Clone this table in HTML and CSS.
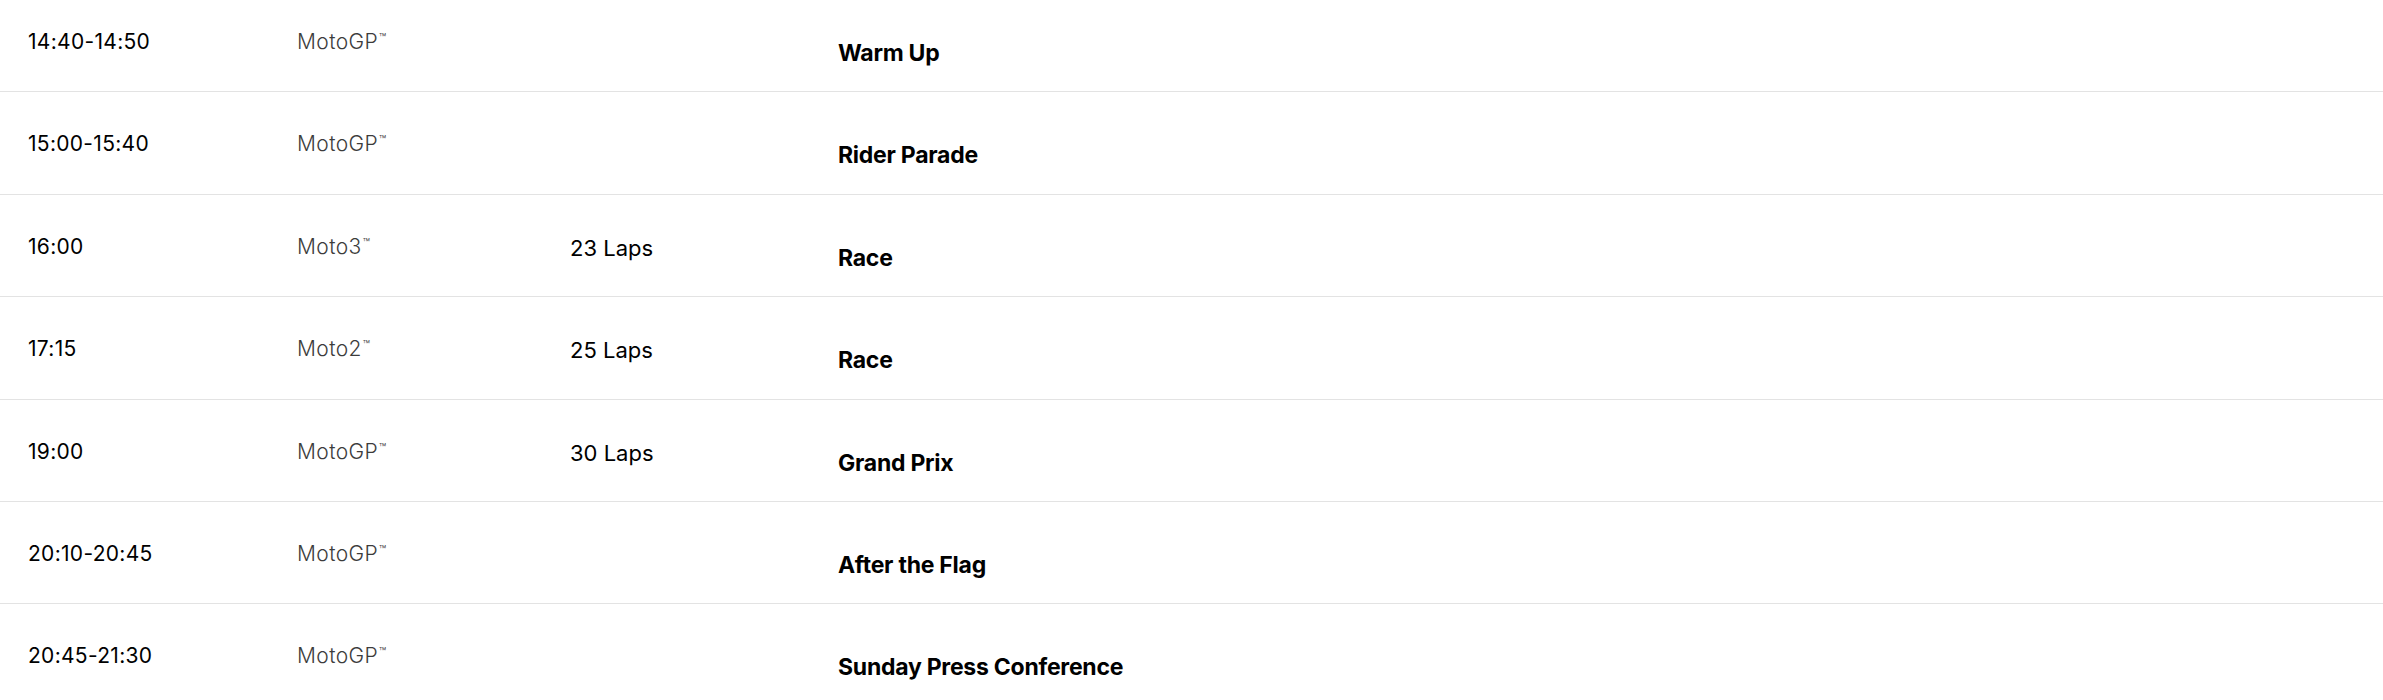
FILE: index.html
```html
<!DOCTYPE html>
<html lang="en">
<head>
<meta charset="utf-8">
<title>Schedule</title>
<link rel="stylesheet" href="styles.css">
</head>
<body>
<div class="schedule">
  <div class="row">
    <div class="time">14:40-14:50</div>
    <div class="cat">MotoGP<sup class="tm">™</sup></div>
    <div class="laps"></div>
    <div class="title">Warm Up</div>
  </div>
  <div class="row">
    <div class="time">15:00-15:40</div>
    <div class="cat">MotoGP<sup class="tm">™</sup></div>
    <div class="laps"></div>
    <div class="title">Rider Parade</div>
  </div>
  <div class="row">
    <div class="time">16:00</div>
    <div class="cat">Moto3<sup class="tm">™</sup></div>
    <div class="laps">23 Laps</div>
    <div class="title">Race</div>
  </div>
  <div class="row">
    <div class="time">17:15</div>
    <div class="cat">Moto2<sup class="tm">™</sup></div>
    <div class="laps">25 Laps</div>
    <div class="title">Race</div>
  </div>
  <div class="row">
    <div class="time">19:00</div>
    <div class="cat">MotoGP<sup class="tm">™</sup></div>
    <div class="laps">30 Laps</div>
    <div class="title">Grand Prix</div>
  </div>
  <div class="row">
    <div class="time">20:10-20:45</div>
    <div class="cat">MotoGP<sup class="tm">™</sup></div>
    <div class="laps"></div>
    <div class="title">After the Flag</div>
  </div>
  <div class="row">
    <div class="time">20:45-21:30</div>
    <div class="cat">MotoGP<sup class="tm">™</sup></div>
    <div class="laps"></div>
    <div class="title">Sunday Press Conference</div>
  </div>
</div>
</body>
</html>
```

FILE: styles.css
```css
html, body {
  margin: 0;
  padding: 0;
  background: #ffffff;
}
body {
  font-family: Inter, "Noto Sans", "Liberation Sans", sans-serif;
  color: #000;
  overflow: hidden;
}
.schedule {
  margin-top: -10px;
}
.row {
  display: grid;
  grid-template-columns: 269px 273px 268px 1fr;
  box-sizing: border-box;
  height: 102.4px;
  padding: 37px 0 0 28px;
  border-bottom: 1px solid #e3e3e3;
  align-items: start;
}
.time {
  font-size: 21px;
  line-height: 30px;
  letter-spacing: 0.3px;
  color: #000;
}
.cat {
  font-size: 21px;
  line-height: 30px;
  letter-spacing: 0.4px;
  color: #3c3c3c;
  font-weight: 300;
}
.tm {
  font-size: 12px;
  vertical-align: top;
  position: relative;
  top: -4px;
  margin-left: 1px;
}
.laps {
  font-size: 22px;
  line-height: 33px;
  margin-top: 0;
}
.title {
  font-size: 23px;
  line-height: 34px;
  font-weight: 700;
  letter-spacing: -0.25px;
  margin-top: 9px;
}
```
